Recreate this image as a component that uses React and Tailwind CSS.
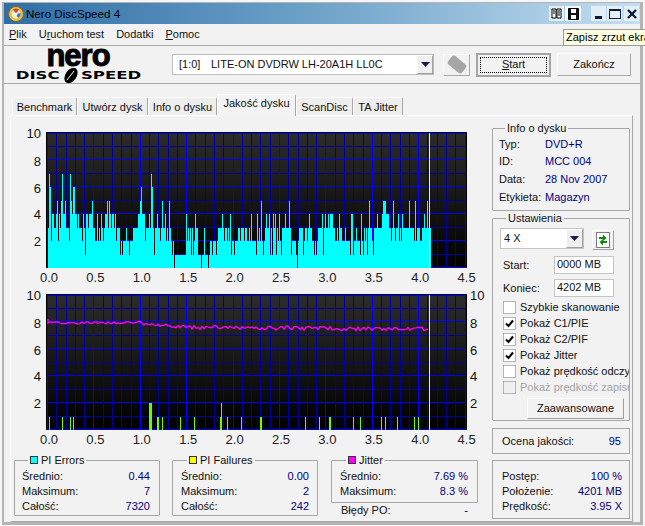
import { useId } from "react";

const font = "font-['Liberation_Sans',Arial,sans-serif]";

// PI errors, one digit per screen pixel starting at x=48
const PIE = [
  "3762443345243574453332754664434333243144344453",
  "3224232432344535434434233312122232212223333344",
  "5644423334376313343323533423253212011111111111",
  "4232313124331110113111012212221233334323323241",
  "221222332333233223",
  "2422221423252123433413143413242133343335312222",
  "1023333123323433221212333341343343444332232433",
  "2223222214412232221421323135332133343333455544",
  "4332353233423243333335333325233322334335323",
].join("");

const PIF = [
  [49, 1, 1], [62, 1, 1], [70, 1, 1], [73, 1, 1], [149, 3, 2], [157, 2, 1], [162, 1, 1],
  [180, 1, 1], [194, 1, 1], [220, 2, 1], [221, 1, 2], [227, 1, 1], [241, 1, 1], [260, 2, 1],
  [305, 1, 1], [319, 1, 1], [329, 2, 1], [353, 1, 1], [360, 1, 1], [381, 1, 1], [385, 1, 1],
  [397, 1, 1], [414, 1, 1], [418, 1, 1],
];

function jitterPoints() {
  let seed = 7;
  const pts = ["48,319"];
  for (let x = 48; x <= 428; x += 2) {
    seed = (seed * 1103 + 12345) % 65536;
    const noise = (seed % 100) / 100 - 0.5;
    let y = 322.7;
    if (x > 140) y = 323 + Math.min(x - 140, 45) * 0.095;
    if (x > 185) y = 327.3 + (x - 185) * 0.008;
    const amp = x < 140 ? 2.4 : 4;
    pts.push(`${x},${(y + noise * amp).toFixed(1)}`);
  }
  return pts.join(" ");
}

const XS = ["0.0", "0.5", "1.0", "1.5", "2.0", "2.5", "3.0", "3.5", "4.0", "4.5"];

function Chart({ top, rightLabels, children }) {
  const gradId = useId();
  const hs = [0, 1, 2, 3, 4, 5, 6, 7, 8, 9, 10].map((n) => top + 1 + n * 13.45);
  const vs = Array.from({ length: 46 }, (_, i) => 47.5 + i * 9.28);
  const labelYs = [top + 1, top + 29, top + 56, top + 82, top + 109];
  return (
    <svg
      className="block"
      width="480"
      height="162"
      viewBox={`11 ${top - 8} 480 162`}
      fontFamily="'Liberation Sans', Arial, sans-serif"
      fontSize="13"
    >
      <defs>
        <linearGradient id={gradId} x1="0" y1="0" x2="0" y2="1">
          <stop offset="0" stopColor="#2c2c2c" />
          <stop offset="1" stopColor="#000000" />
        </linearGradient>
      </defs>
      <rect x="46" y={top} width="421" height="136" fill="#000" />
      <rect x="47" y={top + 1} width="419" height="135" fill={`url(#${gradId})`} />
      <g shapeRendering="crispEdges">
        {hs.map((y, i) => (
          <line key={i} x1="47" x2="466" y1={y} y2={y} stroke={i % 2 === 0 ? "#0000ff" : "#00009a"} />
        ))}
        {vs.map((x, i) => (
          <line key={i} x1={x} x2={x} y1={top + 1} y2={top + 136} stroke={i % 5 === 0 ? "#0000ff" : "#00009a"} />
        ))}
        {children}
        <line x1="429.5" x2="429.5" y1={top + 1} y2={top + 136} stroke="#e4e4f0" />
      </g>
      {[10, 8, 6, 4, 2].map((v, i) => (
        <text key={v} x="41" y={labelYs[i]} textAnchor="end" dominantBaseline="central" fill="#111">
          {v}
        </text>
      ))}
      {rightLabels &&
        [10, 8, 6, 4, 2].map((v, i) => (
          <text key={v} x="470" y={labelYs[i]} dominantBaseline="central" fill="#111">
            {v}
          </text>
        ))}
      {XS.map((t, i) => (
        <text key={t} x={49 + i * 46.4} y={top + 145} textAnchor="middle" dominantBaseline="central" fill="#222">
          {t}
        </text>
      ))}
    </svg>
  );
}

function Tab({ w, active, children }) {
  return (
    <div
      className={`flex items-center justify-center rounded-t-[2px] border-t border-l border-r border-t-white border-l-white border-r-[#a8a8a8] ${
        active ? "z-10 -mb-px h-[22px] bg-[#f3f3f3] pb-1" : "h-[18px] bg-[#eeeeee] pt-px"
      }`}
      style={{ width: w }}
    >
      {children}
    </div>
  );
}

function Group({ title, swatch, className, children }) {
  return (
    <fieldset className={`min-w-0 rounded-[1px] border border-[#a6a6a6] ${className}`}>
      <legend className="ml-[6px] flex h-[14px] items-center gap-[3px] px-[2px] leading-[14px]">
        {swatch && <span className={`h-[8px] w-[8px] border border-[#333] ${swatch}`} />}
        {title}
      </legend>
      {children}
    </fieldset>
  );
}

function Stat({ label, value }) {
  return (
    <div className="flex h-[15px] items-center justify-between leading-[15px]">
      <span>{label}</span>
      <span className="text-[#000080]">{value}</span>
    </div>
  );
}

function ArrowBtn({ className }) {
  return (
    <div className={`flex items-center justify-center border border-t-white border-l-white border-r-[#a0a0a0] border-b-[#a0a0a0] bg-[#efefef] ${className}`}>
      <svg width="9" height="5" viewBox="0 0 9 5">
        <path d="M0 0h9L4.5 5z" fill="#1a1a4a" />
      </svg>
    </div>
  );
}

function Check({ checked, disabled, children }) {
  return (
    <div className={`flex h-[16px] items-center gap-[4px] whitespace-nowrap ${disabled ? "text-[#a3a3a3]" : ""}`}>
      <span className={`flex h-[13px] w-[13px] shrink-0 items-center justify-center border border-[#b4b4b4] ${disabled ? "bg-[#f0f0f0]" : "bg-white"}`}>
        {checked && (
          <svg width="9" height="9" viewBox="0 0 9 9">
            <path d="M1 4.5l2.5 2.5L8 1.5" fill="none" stroke="#000" strokeWidth="2" />
          </svg>
        )}
      </span>
      {children}
    </div>
  );
}

const TitleBtn = ({ className, children }) => (
  <div className={`flex h-[15px] w-[15px] items-center justify-center bg-[#e4eef5] ${className}`}>{children}</div>
);

export default function App() {
  return (
    <div className={`h-[526px] w-[645px] overflow-hidden bg-[#f6f6f6] pt-[2px] pr-[2px] pb-px pl-[2px] text-[11px] text-[#111] ${font}`}>
      <div className="relative flex h-full flex-col border-t border-r-[3px] border-b-[3px] border-l-2 border-[#b4b4b4] bg-[#f2f2f2]">
        {/* title bar */}
        <div className="flex h-[21px] shrink-0 items-center bg-gradient-to-r from-[#2f6ea6] via-[#6fa3c9] to-[#c4dff1] pr-px pl-1">
          <svg width="16" height="16" viewBox="0 0 16 16">
            <circle cx="8" cy="8" r="7.5" fill="#e2c24a" stroke="#7a6a30" />
            <circle cx="8" cy="8" r="4.5" fill="#f3eccd" />
            <path d="M8 8L5 3.5A5 5 0 0 1 11 3.5z" fill="#d8452c" />
            <path d="M8 8L12.5 7A5 5 0 0 1 10 12z" fill="#3b6fc0" />
            <circle cx="8" cy="8" r="1.6" fill="#fff" />
          </svg>
          <span className="ml-[2px] text-[11.6px] text-black">Nero DiscSpeed 4</span>
          <div className="ml-auto flex items-center">
            <TitleBtn>
              <svg width="11" height="11" viewBox="0 0 11 11">
                <path d="M1 1h4v9H1zM6 1h4v9H6z" fill="#fff" stroke="#000" />
                <path d="M2 3h2M2 5h2M7 3h2M7 5h2M7 7h2" stroke="#000" />
              </svg>
            </TitleBtn>
            <TitleBtn className="ml-px w-[16px] bg-[#f4f8fb]">
              <svg width="11" height="12" viewBox="0 0 11 12">
                <path d="M.5.5h10v11H.5z" fill="#111" stroke="#000" />
                <path d="M3 1h5v4H3zM3 7h5v4H3z" fill="#fff" />
              </svg>
            </TitleBtn>
            <TitleBtn className="ml-[10px]">
              <span className="mt-[8px] h-[3px] w-[7px] bg-[#0c1a3a]" />
            </TitleBtn>
            <TitleBtn className="ml-[1px]">
              <span className="h-[10px] w-[12px] border border-t-2 border-[#0c1a3a]" />
            </TitleBtn>
            <TitleBtn className="ml-[2px] w-[15px]">
              <svg width="10" height="10" viewBox="0 0 10 10">
                <path d="M1 1l8 8M9 1l-8 8" stroke="#0c1a3a" strokeWidth="2.4" />
              </svg>
            </TitleBtn>
          </div>
        </div>

        {/* tooltip */}
        <div className="absolute top-[26px] left-[559px] z-20 h-[17px] w-[90px] border border-[#9a9a9a] bg-[#ffffe1] pl-[2px] leading-[15px] whitespace-nowrap text-black">
          Zapisz zrzut ekranu
        </div>

        {/* menu */}
        <div className="flex h-[22px] shrink-0 items-center gap-[12px] border-b border-[#a9a9a9] pl-[5px]">
          <span><u>P</u>lik</span>
          <span>U<u>r</u>uchom test</span>
          <span>Dodatki</span>
          <span><u>P</u>omoc</span>
        </div>

        {/* toolbar */}
        <div className="flex h-[38px] shrink-0 items-center border-b border-[#a9a9a9]">
          <div className="flex w-[148px] flex-col items-center text-black">
            <span className="h-[20px] text-[31px] leading-[16px] font-bold tracking-[-1px] [-webkit-text-stroke:1px_black]">nero</span>
            <div className="mt-[2px] flex h-[12px] items-center font-['DejaVu_Sans',sans-serif] text-[11px] leading-[12px] font-bold">
              <span className="mx-[8px] inline-block scale-x-150">DISC</span>
              <svg width="20" height="15" viewBox="0 0 20 15">
                <ellipse cx="10" cy="7.5" rx="5.5" ry="8.5" transform="rotate(35 10 7.5)" fill="#000" />
                <path d="M6 12L13 3" stroke="#fff" />
              </svg>
              <span className="mx-[10px] inline-block scale-x-150">SPEED</span>
            </div>
          </div>
          <div className="ml-[20px] flex h-[21px] w-[262px] items-center border border-[#bdbdbd] bg-white pl-[6px]">
            <span className="w-[32px] whitespace-nowrap">[1:0]</span>
            <span className="flex-1 whitespace-nowrap">LITE-ON DVDRW LH-20A1H LL0C</span>
            <ArrowBtn className="h-[19px] w-[16px]" />
          </div>
          <div className="ml-[9px] flex h-[22px] w-[27px] items-center justify-center border border-t-white border-l-white border-r-[#a8a8a8] border-b-[#a8a8a8]">
            <span className="h-[11px] w-[18px] rotate-[40deg] rounded-[3px] bg-[#a6a6a6]" />
          </div>
          <div className="ml-[6px] h-[24px] w-[75px] border-2 border-[#a4a4a4] p-[2px]">
            <div className="flex h-full items-center justify-center border border-dotted border-black">
              <span><u>S</u>tart</span>
            </div>
          </div>
          <div className="ml-[6px] flex h-[23px] w-[74px] items-center justify-center border border-t-white border-l-white border-r-[#a8a8a8] border-b-[#a8a8a8]">
            Zakończ
          </div>
        </div>

        {/* tabs */}
        <div className="mt-[13px] ml-[8px] flex h-[18px] shrink-0 items-end">
          <Tab w={65}>Benchmark</Tab>
          <Tab w={71}>Utwórz dysk</Tab>
          <Tab w={69}>Info o dysku</Tab>
          <Tab w={79} active>Jakość dysku</Tab>
          <Tab w={57}>ScanDisc</Tab>
          <Tab w={50}>TA Jitter</Tab>
        </div>

        {/* tab panel */}
        <div className="mr-[7px] ml-[6px] flex h-[407px] border border-t-white border-l-white border-r-[#a8a8a8] border-b-[#a8a8a8]">
          <div className="flex w-[480px] flex-col">
            <div className="mt-[8px]"><Chart top={132}>
              {[...PIE].map((d, i) => (
                <rect key={i} x={48 + i} width="1" y={268 - 13.45 * d} height={13.45 * d} fill="#00ffff" />
              ))}
            </Chart></div>
            <Chart top={294} rightLabels>
              {PIF.map(([x, w, h], i) => (
                <rect key={i} x={x} width={w} y={430 - 13.45 * h} height={13.45 * h} fill="#66ff00" />
              ))}
              <polyline points={jitterPoints()} fill="none" stroke="#ff00ff" strokeWidth="1.3" shapeRendering="auto" />
            </Chart>

            <div className="mt-[5px] ml-[3px] flex items-start gap-[12px]">
              <Group title="PI Errors" swatch="bg-[#00ffff]" className="h-[63px] w-[146px] pt-[2px] pr-[9px] pl-[7px]">
                <Stat label="Średnio:" value="0.44" />
                <Stat label="Maksimum:" value="7" />
                <Stat label="Całość:" value="7320" />
              </Group>
              <Group title="PI Failures" swatch="bg-[#ffff00]" className="h-[63px] w-[146px] pt-[2px] pr-[8px] pl-[8px]">
                <Stat label="Średnio:" value="0.00" />
                <Stat label="Maksimum:" value="2" />
                <Stat label="Całość:" value="242" />
              </Group>
              <div className="ml-px w-[147px]">
                <Group title="Jitter" swatch="bg-[#ff00ff]" className="h-[50px] pt-[2px] pr-[9px] pl-[8px]">
                  <Stat label="Średnio:" value="7.69 %" />
                  <Stat label="Maksimum:" value="8.3 %" />
                </Group>
                <div className="px-[10px]">
                  <Stat label="Błędy PO:" value="-" />
                </div>
              </div>
            </div>
          </div>

          <div className="ml-px flex w-[138px] flex-col pt-[5px]">
            <Group title="Info o dysku" className="h-[90px] pl-[6px]">
              {[
                ["Typ:", "DVD+R"],
                ["ID:", "MCC 004"],
                ["Data:", "28 Nov 2007"],
                ["Etykieta:", "Magazyn"],
              ].map(([k, v]) => (
                <div key={k} className="flex h-[17.7px] items-center">
                  <span className="w-[46px]">{k}</span>
                  <span className="text-[#000080]">{v}</span>
                </div>
              ))}
            </Group>

            <Group title="Ustawienia" className="h-[210px] overflow-hidden pl-[7px]">
              <div className="mt-[3px] flex items-start">
                <div className="flex h-[21px] w-[84px] items-center border border-[#c4c4c4] bg-white pl-[3px]">
                  <span className="flex-1">4 X</span>
                  <ArrowBtn className="h-[19px] w-[17px]" />
                </div>
                <div className="mt-[2px] ml-[8px] flex h-[20px] w-[22px] items-center justify-center border border-t-white border-l-white border-r-[#a0a0a0] border-b-[#a0a0a0]">
                  <svg width="14" height="16" viewBox="0 0 14 16">
                    <rect x=".5" y=".5" width="13" height="15" fill="#fff" stroke="#000" strokeDasharray="1 1" />
                    <path d="M3 7V5h4V2.5l3.5 3.5L7 9V7z" fill="#0a8a0a" />
                    <path d="M11 9v2H7v2.5L3.5 10 7 7v2z" fill="#0a8a0a" />
                  </svg>
                </div>
              </div>
              <div className="mt-[6px] flex h-[18px] items-center">
                <span className="w-[54px] pl-[3px]">Start:</span>
                <span className="h-[18px] w-[60px] border border-[#c4c4c4] bg-white pl-[2px] leading-[15px]">0000 MB</span>
              </div>
              <div className="mt-[5px] flex h-[18px] items-center">
                <span className="w-[54px] pl-[3px]">Koniec:</span>
                <span className="h-[18px] w-[60px] border border-[#c4c4c4] bg-white pl-[2px] leading-[15px]">4202 MB</span>
              </div>
              <div className="mt-[2px] pl-[3px]">
                <Check>Szybkie skanowanie</Check>
                <Check checked>Pokaż C1/PIE</Check>
                <Check checked>Pokaż C2/PIF</Check>
                <Check checked>Pokaż Jitter</Check>
                <Check>Pokaż prędkość odczytu</Check>
                <Check disabled>Pokaż prędkość zapisu</Check>
              </div>
              <div className="mt-[3px] ml-[27px] flex h-[21px] w-[97px] items-center justify-center border border-t-white border-l-white border-r-[#a0a0a0] border-b-[#a0a0a0]">
                Zaawansowane
              </div>
            </Group>

            <div className="mt-[7px] flex h-[26px] items-center justify-between border border-[#a6a6a6] pr-[8px] pl-[9px]">
              <span>Ocena jakości:</span>
              <span className="text-[#000080]">95</span>
            </div>

            <div className="mt-[6px] h-[59px] border border-[#a6a6a6] pt-[8px] pr-[7px] pl-[9px]">
              <Stat label="Postęp:" value="100 %" />
              <Stat label="Położenie:" value="4201 MB" />
              <Stat label="Prędkość:" value="3.95 X" />
            </div>
          </div>
        </div>
      </div>
    </div>
  );
}
